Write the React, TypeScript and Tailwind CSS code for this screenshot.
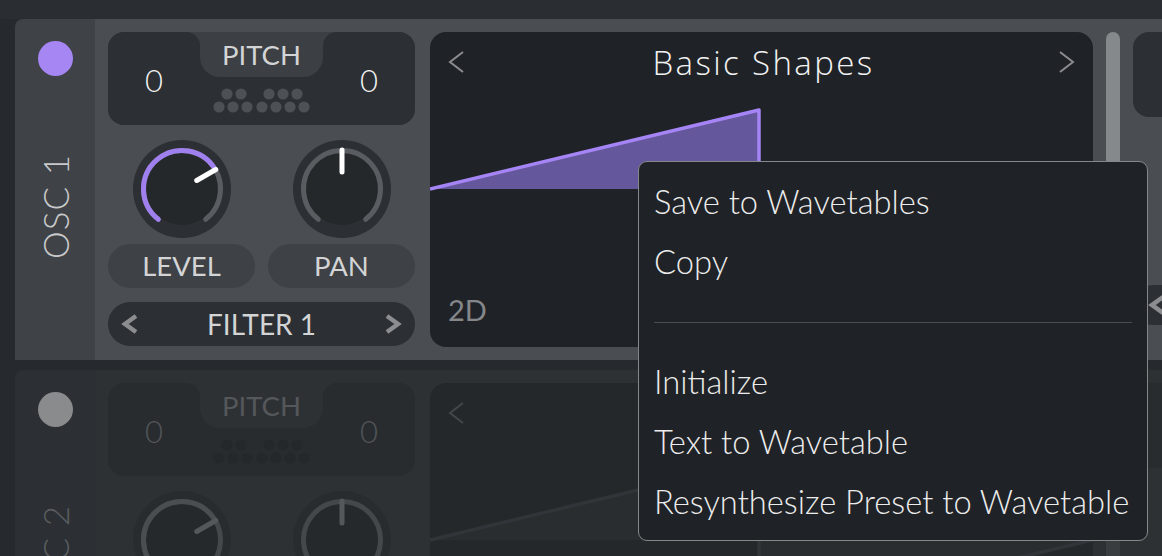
import React from "react";

function pt(cx: number, cy: number, r: number, a: number): [number, number] {
  const t = (a * Math.PI) / 180;
  return [cx + r * Math.sin(t), cy - r * Math.cos(t)];
}
function arc(cx: number, cy: number, r: number, a1: number, a2: number) {
  const [x1, y1] = pt(cx, cy, r, a1);
  const [x2, y2] = pt(cx, cy, r, a2);
  const large = a2 - a1 > 180 ? 1 : 0;
  return `M ${x1} ${y1} A ${r} ${r} 0 ${large} 1 ${x2} ${y2}`;
}

function Knob({ angle, purple, active }: { angle: number; purple: boolean; active: boolean }) {
  const [ix1, iy1] = pt(49, 49, 17, angle);
  const [ix2, iy2] = pt(49, 49, 39, angle);
  return (
    <svg width="98" height="98" viewBox="0 0 98 98">
      <circle cx="49" cy="49" r="49" fill={active ? "#2c2f33" : "#292c2f"} />
      <circle cx="49" cy="49" r="36" fill={active ? "#25282b" : "#26292c"} />
      <path d={arc(49, 49, 38.5, -142, 142)} stroke={active ? "#595c60" : "#45484b"} strokeWidth="5" fill="none" strokeLinecap="round" />
      {purple && active && (
        <path d={arc(49, 49, 38.5, -142, angle)} stroke="#a080ef" strokeWidth="5" fill="none" strokeLinecap="round" />
      )}
      {purple && !active && (
        <path d={arc(49, 49, 38.5, -142, angle)} stroke="#4b4e51" strokeWidth="5" fill="none" strokeLinecap="round" />
      )}
      <line x1={ix1} y1={iy1} x2={ix2} y2={iy2} stroke={active ? "#ffffff" : "#55585b"} strokeWidth="5" strokeLinecap="round" />
    </svg>
  );
}

function Chevron({ dir, color, w = 18, h = 22, sw = 4.5 }: { dir: "l" | "r"; color: string; w?: number; h?: number; sw?: number }) {
  const pts = dir === "l" ? `${w - 3},3 4,${h / 2} ${w - 3},${h - 3}` : `3,3 ${w - 4},${h / 2} 3,${h - 3}`;
  return (
    <svg width={w} height={h} viewBox={`0 0 ${w} ${h}`}>
      <polyline points={pts} fill="none" stroke={color} strokeWidth={sw} strokeLinecap="butt" strokeLinejoin="miter" />
    </svg>
  );
}

function PianoDots({ color }: { color: string }) {
  const bottom = [19, 33, 47, 62, 76, 90, 104];
  const top = [27, 41, 69, 83, 97];
  return (
    <svg width="123" height="48" viewBox="0 0 123 48">
      {top.map((x) => (
        <circle key={"t" + x} cx={x} cy="17" r="5.6" fill={color} />
      ))}
      {bottom.map((x) => (
        <circle key={"b" + x} cx={x} cy="30" r="5.6" fill={color} />
      ))}
    </svg>
  );
}

function Osc({ active, label }: { active: boolean; label: string }) {
  const dark = active ? "bg-[#2c2f33]" : "bg-[#292c2f]";
  return (
    <div className="flex h-[341px] w-[1160px] shrink-0 ml-[15px] rounded-tl-[8px] overflow-hidden">
      <div className={"w-[80px] shrink-0 flex flex-col items-center " + (active ? "bg-[#3f4246]" : "bg-[#2c2f33]")}>
        <div className={"mt-[22px] w-[35px] h-[35px] rounded-full " + (active ? "bg-[#a586f2]" : "bg-[#8a8b8d]")} />
        <div
          className={
            "mt-[78px] [writing-mode:vertical-rl] rotate-180 text-[35px] leading-none font-light tracking-[1px] " +
            (active ? "text-[#c8c9cb]" : "text-[#5a5d60]")
          }
        >
          {label}
        </div>
      </div>
      <div className={"flex-1 flex pl-[13px] pt-[13px] " + (active ? "bg-[#4a4d51]" : "bg-[#2e3134]")}>
        {/* controls */}
        <div className="w-[307px] flex flex-col shrink-0">
          <div className={"flex h-[93px] rounded-[16px] overflow-hidden " + (active ? "bg-[#3c3f43]" : "bg-[#2e3134]")}>
            <div className={"w-[92px] shrink-0 rounded-tr-[14px] flex items-center justify-center pt-[3px] " + dark}>
              <span className={"text-[31px] font-light leading-none " + (active ? "text-[#f2f2f2]" : "text-[#525558]")}>0</span>
            </div>
            <div className={"w-[123px] shrink-0 flex flex-col " + dark}>
              <div
                className={
                  "h-[45px] rounded-b-[20px] flex items-center justify-center text-[27.5px] leading-none pt-[1px] " +
                  (active ? "bg-[#3c3f43] text-[#d3d4d5]" : "bg-[#2e3134] text-[#55585b]")
                }
              >
                PITCH
              </div>
              <PianoDots color={active ? "#4d5054" : "#25282b"} />
            </div>
            <div className={"w-[92px] shrink-0 rounded-tl-[14px] flex items-center justify-center pt-[3px] " + dark}>
              <span className={"text-[31px] font-light leading-none " + (active ? "text-[#f2f2f2]" : "text-[#525558]")}>0</span>
            </div>
          </div>
          <div className="grid grid-cols-2 gap-x-[13px] mt-[15px]">
            <div className="flex justify-center">
              <Knob angle={60} purple={true} active={active} />
            </div>
            <div className="flex justify-center">
              <Knob angle={0} purple={false} active={active} />
            </div>
          </div>
          <div className="grid grid-cols-2 gap-x-[13px] mt-[6px]">
            <div className={"h-[44px] rounded-full flex items-center justify-center text-[27.5px] leading-none " + (active ? "bg-[#3e4145] text-[#d3d4d5]" : "bg-[#2b2e31] text-[#55585b]")}>
              LEVEL
            </div>
            <div className={"h-[44px] rounded-full flex items-center justify-center text-[27.5px] leading-none " + (active ? "bg-[#3e4145] text-[#d3d4d5]" : "bg-[#2b2e31] text-[#55585b]")}>
              PAN
            </div>
          </div>
          <div className={"mt-[14px] h-[44px] rounded-full flex items-center justify-between px-[13px] " + dark}>
            <Chevron dir="l" color={active ? "#8b8d90" : "#45484b"} />
            <span className={"text-[28px] leading-none " + (active ? "text-[#d3d4d5]" : "text-[#55585b]")}>FILTER 1</span>
            <Chevron dir="r" color={active ? "#8b8d90" : "#45484b"} />
          </div>
        </div>
        {/* wave display */}
        <div className={"ml-[15px] w-[663px] h-[315px] shrink-0 rounded-[16px] relative overflow-hidden " + (active ? "bg-[#1f2226]" : "bg-[#25282b]")}>
          <svg className="absolute left-0 top-0" width="663" height="315" viewBox="0 0 663 315">
            <polygon points="0,157 329,78 329,157" fill={active ? "#65579b" : "#2a2d30"} />
            <polygon points="329,157 329,236 663,157" fill={active ? "#65579b" : "#2a2d30"} />
            <polyline points="0,157 329,78 329,236 663,157" fill="none" stroke={active ? "#a584f5" : "#313438"} strokeWidth="3.5" strokeLinejoin="round" />
          </svg>
          <div className="relative flex items-center justify-between h-[60px] px-[16px]">
            <Chevron dir="l" color={active ? "#8a8c8f" : "#44474a"} w={20} h={26} sw={2} />
            {active && (
              <span className="text-[33px] font-light leading-none tracking-[2.4px] text-[#f2f2f2] font-['Open_Sans',sans-serif] pl-[4px]">
                Basic Shapes
              </span>
            )}
            {active && <Chevron dir="r" color="#8a8c8f" w={20} h={26} sw={2} />}
          </div>
          {active && <div className="absolute left-[18px] top-[263px] text-[29px] leading-none text-[#85878a]">2D</div>}
        </div>
        {/* scrollbar */}
        <div className={"ml-[13px] w-[14px] h-[315px] rounded-full shrink-0 " + (active ? "bg-[#86898c]" : "bg-[#3a3d40]")} />
        {/* next column */}
        <div className="ml-[13px] flex flex-col w-[60px] shrink-0">
          <div className={"h-[85px] rounded-l-[16px] " + dark} />
          <div className={"mt-[168px] h-[40px] rounded-l-[20px] flex items-center pl-[15px] " + dark}>
            <Chevron dir="l" color={active ? "#8b8d90" : "#45484b"} />
          </div>
        </div>
      </div>
    </div>
  );
}

function Menu() {
  const row = "h-[60px] flex items-center text-[32.7px] font-light leading-none text-[#ececec]";
  return (
    <div className="absolute left-[638px] top-[161px] w-[510px] h-[380px] rounded-[9px] border border-[#85888b] bg-[#1f2226] pt-[10px] px-[15px]">
      <div className={row}>Save to Wavetables</div>
      <div className={row}>Copy</div>
      <div className="h-[60px] flex items-center">
        <div className="h-[1px] w-full bg-[#4a4c4f]" />
      </div>
      <div className={row}>Initialize</div>
      <div className={row}>Text to Wavetable</div>
      <div className={row}>Resynthesize Preset to Wavetable</div>
    </div>
  );
}

export default function App() {
  return (
    <div className="relative w-[1162px] h-[556px] overflow-hidden bg-[#26292d] font-['Lato',sans-serif]">
      <div className="h-[19px] bg-[#2a2d31]" />
      <Osc active={true} label="OSC 1" />
      <div className="h-[10px]" />
      <Osc active={false} label="OSC 2" />
      <Menu />
    </div>
  );
}
